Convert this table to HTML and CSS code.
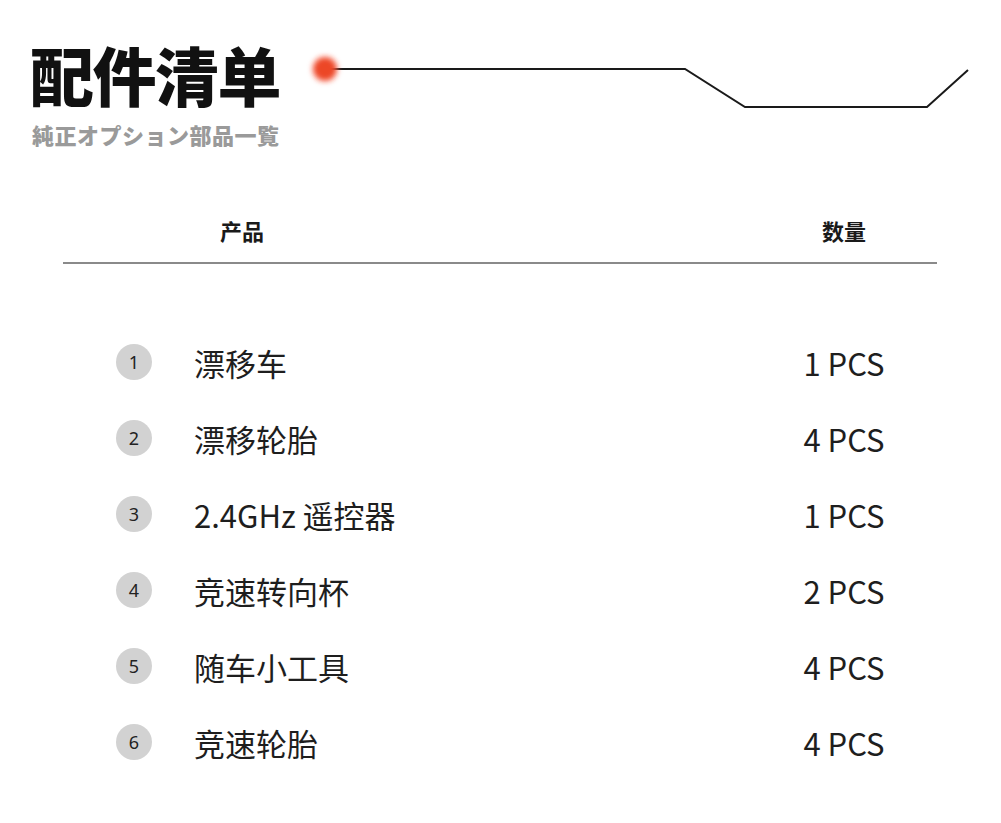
FILE: index.html
```html
<!DOCTYPE html>
<html lang="zh-CN">
<head>
<meta charset="utf-8">
<link rel="stylesheet" href="styles.css">
</head>
<body>
<div class="page">
  <header class="top">
    <div class="titles">
      <h1 class="title">配件清单</h1>
      <p class="subtitle" lang="ja">純正オプション部品一覧</p>
    </div>
    <svg class="deco" width="680" height="70" viewBox="0 0 680 70">
      <defs>
        <filter id="blur" x="-1" y="-1" width="3" height="3">
          <feGaussianBlur stdDeviation="2.4"/>
        </filter>
      </defs>
      <polyline points="26,19 385,19 445,57 627,57 668,20" fill="none" stroke="#1a1a1a" stroke-width="2"/>
      <circle cx="25" cy="19" r="14" fill="#ff7a66" opacity="0.4" filter="url(#blur)"/>
      <circle cx="25" cy="19" r="11" fill="#ec4628" filter="url(#blur)"/>
    </svg>
  </header>

  <section class="table">
    <div class="thead">
      <div class="th">产品</div>
      <div></div>
      <div class="th">数量</div>
    </div>
    <ul class="rows">
      <li class="row"><span class="num">1</span><span class="name">漂移车</span><span class="qty">1 PCS</span></li>
      <li class="row"><span class="num">2</span><span class="name">漂移轮胎</span><span class="qty">4 PCS</span></li>
      <li class="row"><span class="num">3</span><span class="name">2.4GHz 遥控器</span><span class="qty">1 PCS</span></li>
      <li class="row"><span class="num">4</span><span class="name">竞速转向杯</span><span class="qty">2 PCS</span></li>
      <li class="row"><span class="num">5</span><span class="name">随车小工具</span><span class="qty">4 PCS</span></li>
      <li class="row"><span class="num">6</span><span class="name">竞速轮胎</span><span class="qty">4 PCS</span></li>
    </ul>
  </section>
</div>
</body>
</html>
```

FILE: styles.css
```css
* { box-sizing: border-box; }
html, body { margin: 0; padding: 0; background: #fff; }
body {
  font-family: "Noto Sans CJK SC", "Noto Sans", sans-serif;
  color: #1e1e1e;
}
.page { width: 1001px; height: 823px; overflow: hidden; }

.top {
  display: flex;
  align-items: flex-start;
  padding: 41px 0 0 30px;
}
.titles { width: 270px; }
.title {
  margin: 0;
  font-size: 64px;
  line-height: 64px;
  font-weight: 900;
  color: #111;
  letter-spacing: -1.5px;
}
.subtitle {
  margin: 15px 0 0 2px;
  font-family: "Noto Sans CJK JP", "Noto Sans CJK SC", sans-serif;
  font-size: 22px;
  line-height: 28px;
  font-weight: 900;
  color: #9a9a9a;
  letter-spacing: 0.5px;
  white-space: nowrap;
}
.deco { display: block; margin-top: 9px; }

.table {
  margin: 54px 0 0 63px;
  width: 874px;
}
.thead {
  display: grid;
  grid-template-columns: 358px 1fr 186px;
  height: 62px;
  padding-bottom: 5px;
  align-items: center;
  border-bottom: 2px solid #8a8a8a;
}
.th {
  text-align: center;
  font-size: 22px;
  font-weight: 700;
  color: #1a1a1a;
}
.rows {
  list-style: none;
  margin: 60px 0 0;
  padding: 0 0 0 53px;
}
.row {
  display: grid;
  grid-template-columns: 36px 1fr 186px;
  column-gap: 42px;
  align-items: center;
  height: 76px;
}
.num {
  width: 36px;
  height: 36px;
  border-radius: 50%;
  background: #d2d2d2;
  display: flex;
  align-items: center;
  justify-content: center;
  font-family: "Noto Sans", sans-serif;
  font-size: 18px;
  color: #222;
}
.name {
  font-size: 31px;
  color: #1e1e1e;
}
.qty {
  text-align: center;
  font-size: 31px;
  color: #1e1e1e;
}
```
